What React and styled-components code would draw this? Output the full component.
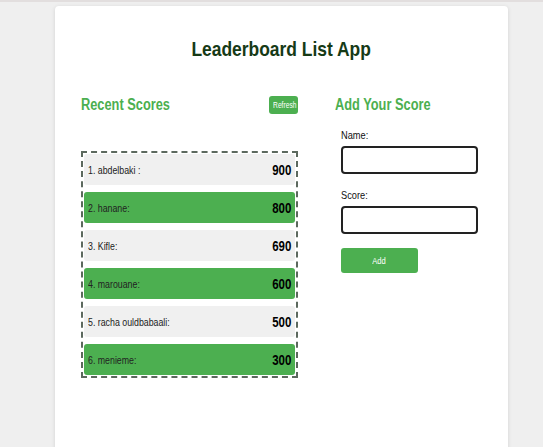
import React from "react";
import styled, { createGlobalStyle } from "styled-components";

const GlobalStyle = createGlobalStyle`
  html, body {
    margin: 0;
    padding: 0;
    background: #efefef;
    font-family: "Liberation Sans", Arial, sans-serif;
  }
`;

// the reference text is a condensed face; squeeze Liberation Sans to match
const Narrow = styled.span`
  display: inline-block;
  white-space: nowrap;
  transform: scaleX(${(p) => p.scale || 0.84});
  transform-origin: ${(p) => p.origin || "left"} center;
`;

const Page = styled.div`
  border-top: 2px solid #e2dede;
  padding: 4px 35px 0 55px;
  min-height: 441px;
`;

const Card = styled.div`
  width: 453px;
  min-height: 460px;
  background: #fff;
  border-radius: 4px;
  box-shadow: 0 1px 4px rgba(0, 0, 0, 0.12);
  padding: 28px 0 0 26px;
  box-sizing: border-box;
`;

const Title = styled.h1`
  margin: 0 26px 0 0;
  text-align: center;
  font-size: 21px;
  font-weight: 700;
  color: #163a16;
  line-height: 30px;
`;

const Columns = styled.div`
  display: flex;
  gap: 37px;
  margin-top: 28px;
`;

const LeftColumn = styled.div`
  width: 217px;
`;

const RightColumn = styled.div`
  width: 150px;
`;

const HeadRow = styled.div`
  display: flex;
  justify-content: space-between;
  align-items: center;
  height: 26px;
`;

const Heading = styled.h2`
  margin: 0;
  font-size: 16px;
  font-weight: 700;
  color: #4caf50;
  line-height: 26px;
`;

const SmallButton = styled.button`
  border: 0;
  outline: 0;
  background: #4caf50;
  color: #fff;
  font-family: inherit;
  font-size: 9px;
  border-radius: 3px;
  padding: 0;
  width: ${(p) => p.w}px;
  height: ${(p) => p.h}px;
  cursor: pointer;
  overflow: hidden;
`;

const ScoreList = styled.ul`
  list-style: none;
  margin: 33px 0 0;
  padding: 1px;
  border: 2px dashed #5c695e;
  display: flex;
  flex-direction: column;
  gap: 7px;
`;

const ScoreRow = styled.li`
  display: flex;
  justify-content: space-between;
  align-items: center;
  height: 31px;
  padding: 0 4px;
  border-radius: 3px;
  background: ${(p) => (p.highlight ? "#4caf50" : "#f0f0f0")};
`;

const PlayerName = styled.span`
  font-size: 11px;
  color: #222;
`;

const Points = styled.span`
  font-size: 14px;
  font-weight: 700;
  color: #000;
`;

const Form = styled.form`
  display: flex;
  flex-direction: column;
  padding-left: 6px;
  margin-top: 10px;
`;

const Label = styled.label`
  font-size: 11px;
  color: #111;
  line-height: 14px;
  margin-bottom: 4px;
`;

const Input = styled.input`
  width: 137px;
  height: 28px;
  box-sizing: border-box;
  border: 2px solid #222;
  border-radius: 4px;
  margin-bottom: 14px;
  outline: 0;
`;

const scores = [
  { name: "1. abdelbaki :", score: 900 },
  { name: "2. hanane:", score: 800 },
  { name: "3. Kifle:", score: 690 },
  { name: "4. marouane:", score: 600 },
  { name: "5. racha ouldbabaali:", score: 500 },
  { name: "6. menieme:", score: 300 },
];

export default function App() {
  return (
    <Page>
      <GlobalStyle />
      <Card>
        <Title>
          <Narrow origin="center" scale={0.83}>Leaderboard List App</Narrow>
        </Title>
        <Columns>
          <LeftColumn>
            <HeadRow>
              <Heading>
                <Narrow scale={0.8}>Recent Scores</Narrow>
              </Heading>
              <SmallButton w={29} h={18}>
                <Narrow origin="center" scale={0.74}>Refresh</Narrow>
              </SmallButton>
            </HeadRow>
            <ScoreList>
              {scores.map((s, i) => (
                <ScoreRow key={s.name} highlight={i % 2 === 1}>
                  <PlayerName>
                    <Narrow scale={0.8}>{s.name}</Narrow>
                  </PlayerName>
                  <Points>
                    <Narrow origin="right" scale={0.82}>{s.score}</Narrow>
                  </Points>
                </ScoreRow>
              ))}
            </ScoreList>
          </LeftColumn>
          <RightColumn>
            <Heading>
              <Narrow scale={0.8}>Add Your Score</Narrow>
            </Heading>
            <Form onSubmit={(e) => e.preventDefault()}>
              <Label>
                <Narrow scale={0.84}>Name:</Narrow>
              </Label>
              <Input type="text" />
              <Label>
                <Narrow scale={0.84}>Score:</Narrow>
              </Label>
              <Input type="text" />
              <SmallButton w={77} h={25} type="button">
                <Narrow origin="center" scale={0.84}>Add</Narrow>
              </SmallButton>
            </Form>
          </RightColumn>
        </Columns>
      </Card>
    </Page>
  );
}
